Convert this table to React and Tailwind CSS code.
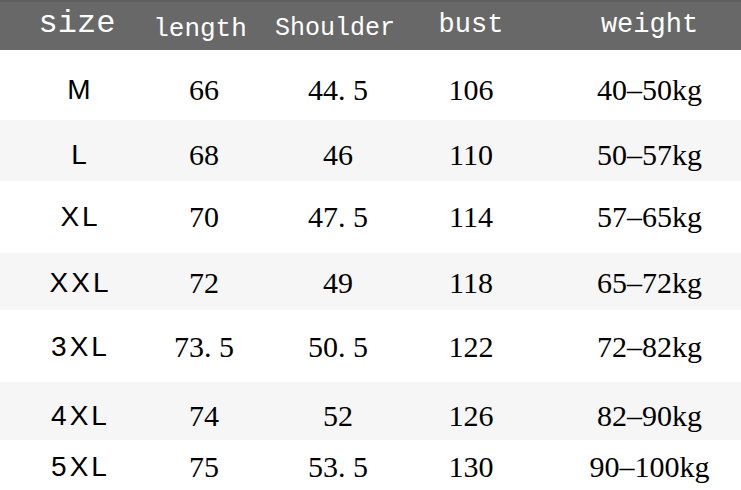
import React from "react";

const cols = "grid grid-cols-[158px_92px_176px_90px_225px]";

const rows = [
  { size: "M", length: "66", shoulder: "44. 5", bust: "106", weight: "40–50kg", h: "h-[70px]", bg: "bg-white", pad: "pt-[10px]" },
  { size: "L", length: "68", shoulder: "46", bust: "110", weight: "50–57kg", h: "h-[61px]", bg: "bg-[#f6f6f6]", pad: "pt-[9px]" },
  { size: "XL", length: "70", shoulder: "47. 5", bust: "114", weight: "57–65kg", h: "h-[72px]", bg: "bg-white", pad: "pt-0" },
  { size: "XXL", length: "72", shoulder: "49", bust: "118", weight: "65–72kg", h: "h-[57px]", bg: "bg-[#f6f6f6]", pad: "pt-[3px]" },
  { size: "3XL", length: "73. 5", shoulder: "50. 5", bust: "122", weight: "72–82kg", h: "h-[72px]", bg: "bg-white", pad: "pt-[2px]" },
  { size: "4XL", length: "74", shoulder: "52", bust: "126", weight: "82–90kg", h: "h-[58px]", bg: "bg-[#f6f6f6]", pad: "pt-[10px]" },
  { size: "5XL", length: "75", shoulder: "53. 5", bust: "130", weight: "90–100kg", h: "h-[50px]", bg: "bg-white", pad: "pt-[4px]" },
];

function Num({ children }) {
  return (
    <div className="flex items-center justify-center font-['Liberation_Serif',serif] text-[30px] leading-none text-black">
      {children}
    </div>
  );
}

export default function App() {
  return (
    <div className="w-[741px] h-[490px] overflow-hidden bg-white">
      {/* header */}
      <div className={`${cols} h-[50px] bg-[#686868] border-t-2 border-[#5f5f5f] text-white font-['Liberation_Mono',monospace] leading-none`}>
        <div className="flex items-center justify-center text-[32px] pb-[4px] pr-[4px]">size</div>
        <div className="flex items-center justify-center text-[26px] pt-[6px] pr-[8px]">length</div>
        <div className="flex items-center justify-center text-[25px] pt-[4px] pr-[6px]">Shoulder</div>
        <div className="flex items-center justify-center text-[27px] pb-[2px]">bust</div>
        <div className="flex items-center justify-center text-[27px] pl-[42px] pb-[2px]">weight</div>
      </div>

      {rows.map((r) => (
        <div key={r.size} className={`${cols} ${r.h} ${r.bg} ${r.pad}`}>
          <div className="flex items-center justify-center pl-[3px] font-['Liberation_Sans',sans-serif] text-[28px] tracking-[3px] leading-none text-black">
            {r.size}
          </div>
          <Num>{r.length}</Num>
          <Num>{r.shoulder}</Num>
          <Num>{r.bust}</Num>
          <div className="flex items-center justify-center pl-[42px] font-['Liberation_Serif',serif] text-[30px] leading-none text-black">
            {r.weight}
          </div>
        </div>
      ))}
    </div>
  );
}
